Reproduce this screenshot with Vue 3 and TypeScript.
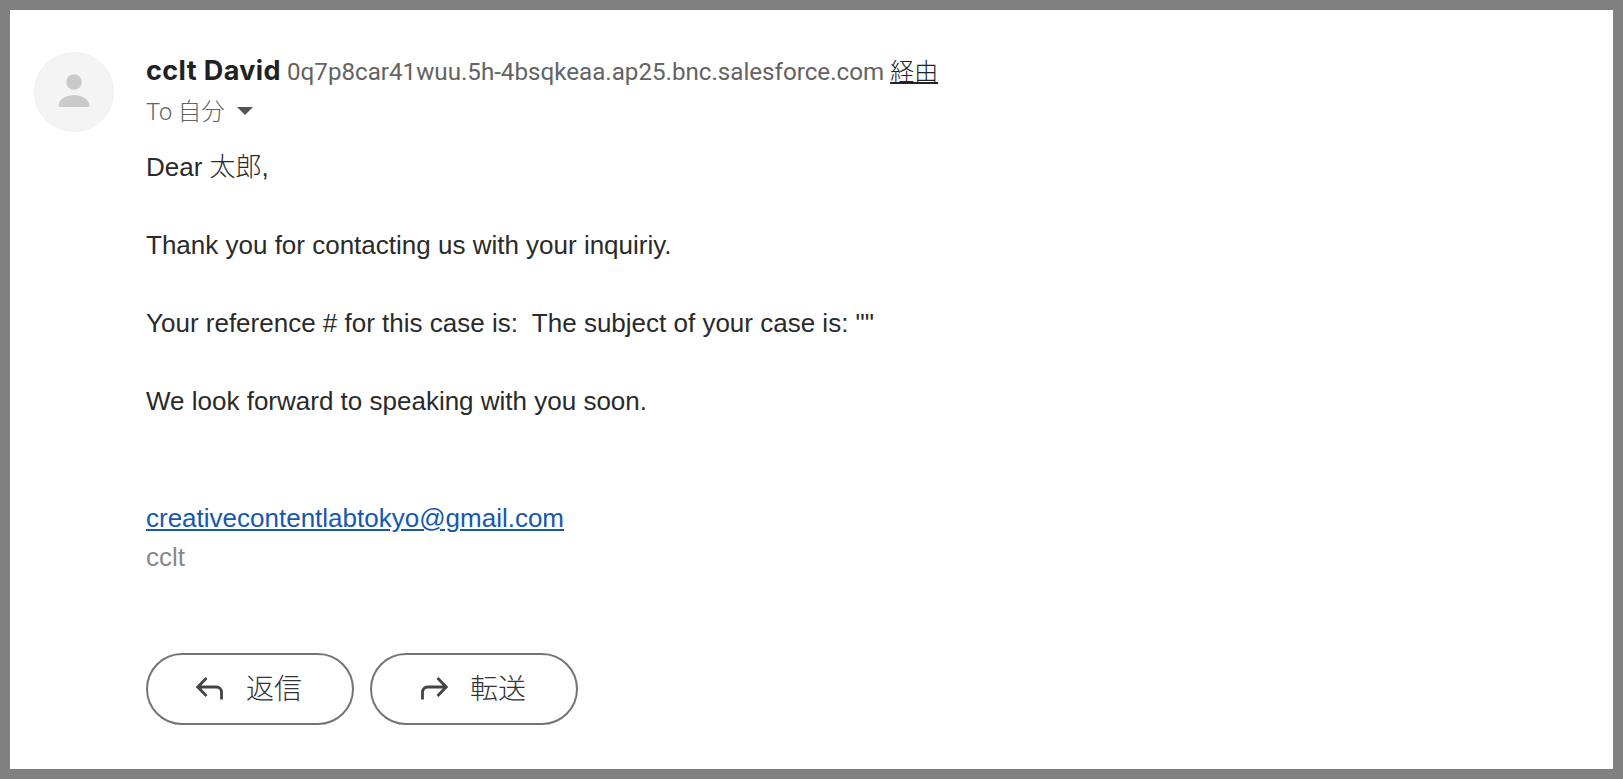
<script setup lang="ts">
const paragraphs: string[] = [
  'Thank you for contacting us with your inquiriy.',
  'Your reference # for this case is:  The subject of your case is: ""',
  'We look forward to speaking with you soon.',
]
</script>

<template>
  <div class="frame">
    <div class="mail">
      <div class="avatar">
        <svg viewBox="0 0 80 80" width="80" height="80">
          <circle cx="40" cy="40" r="39.500" fill="#f4f4f4" stroke="#efefef" />
          <circle cx="40" cy="30" r="7.800" fill="#cacaca" />
          <path d="M24.700 53c0-6 9-10 15.300-10s15.300 4 15.300 10v1q0 1-1 1H25.700q-1 0-1-1z" fill="#cacaca" />
        </svg>
      </div>
      <div class="content">
        <div class="from">
          <span class="name">cclt David</span>
          <span class="addr">0q7p8car41wuu.5h-4bsqkeaa.ap25.bnc.salesforce.com</span>
          <a class="via">経由</a>
        </div>
        <div class="to">
          <span>To 自分</span>
          <svg class="caret" viewBox="0 0 16 8" width="16" height="8"><path d="M0 0h16L8 8z" fill="#555" /></svg>
        </div>
        <div class="body">
          <p>Dear <span class="cjk">太郎</span>,</p>
          <p v-for="p in paragraphs" :key="p">{{ p }}</p>
          <a class="link">creativecontentlabtokyo@gmail.com</a>
          <div class="sig">cclt</div>
        </div>
        <div class="actions">
          <button class="btn">
            <svg viewBox="0 0 28 24" width="28" height="24"><path d="M10.500 2 1.800 11l8.700 9M2 11h18.500a5 5 0 0 1 5 5v7.500" fill="none" stroke="#444" stroke-width="2.800" /></svg>
            <span class="label">返信</span>
          </button>
          <button class="btn">
            <svg viewBox="0 0 28 24" width="28" height="24"><path d="M17.500 2l8.700 9-8.700 9M26 11H7.500a5 5 0 0 0-5 5v7.500" fill="none" stroke="#444" stroke-width="2.800" /></svg>
            <span class="label">転送</span>
          </button>
        </div>
      </div>
    </div>
  </div>
</template>

<style>
html, body { margin: 0; background: #fff; }
</style>

<style scoped>
.frame {
  box-sizing: border-box;
  width: 1623px;
  height: 779px;
  border: 10px solid #808080;
  background: #fff;
  overflow: hidden;
}
.mail {
  display: flex;
  padding: 42px 0 0 24px;
  gap: 32px;
}
.avatar { width: 80px; height: 80px; flex: none; }
.content { flex: 1; min-width: 0; }
.from {
  display: flex;
  align-items: baseline;
  height: 40px;
  white-space: pre;
}
.name {
  font-family: Inter, "Noto Sans", sans-serif;
  font-size: 27px;
  font-weight: 700;
  letter-spacing: 0.4px;
  line-height: 38px;
  color: #222;
}
.addr {
  margin-left: 6px;
  font-family: Roboto, sans-serif;
  font-size: 24.170px;
  color: #636363;
}
.via {
  margin-left: 6px;
  font-family: "Noto Sans CJK JP", sans-serif;
  font-size: 24px;
  font-weight: 300;
  color: #222;
  text-decoration: underline;
}
.to {
  display: flex;
  align-items: center;
  gap: 12px;
  height: 36px;
  font-family: Roboto, "Noto Sans CJK JP", sans-serif;
  font-size: 23.500px;
  font-weight: 300;
  color: #636363;
}
.caret { margin-top: 2px; }
.body {
  margin-top: 20px;
  font-family: "Liberation Sans", "Noto Sans CJK JP", sans-serif;
  font-size: 26px;
  line-height: 39px;
  color: #2a2a2a;
  white-space: pre;
}
.cjk { font-weight: 300; }
.body p { margin: 0 0 39px; }
.body p:last-of-type { margin-bottom: 78px; }
.link { display: block; color: #1558b0; text-decoration: underline; }
.sig { color: #888; }
.actions {
  display: flex;
  gap: 16px;
  margin-top: 76px;
}
.btn {
  display: flex;
  align-items: center;
  justify-content: center;
  gap: 22px;
  box-sizing: border-box;
  width: 208px;
  height: 72px;
  padding: 0 2px 2px 0;
  border: 2px solid #747474;
  border-radius: 36px;
  background: #fff;
  font-family: "Noto Sans CJK JP", sans-serif;
  font-size: 28px;
  font-weight: 300;
  color: #333;
}
.label { margin-bottom: 3px; }
</style>
